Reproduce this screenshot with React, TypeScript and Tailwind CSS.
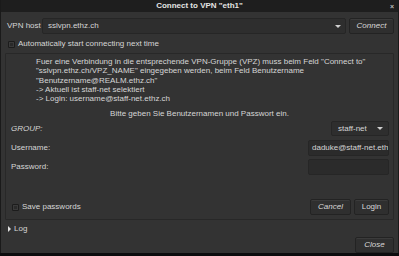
import { useState } from 'react'

const font = { fontFamily: '"Liberation Sans", Arial, sans-serif' }

function Check({ label, checked, onChange }: { label: string; checked: boolean; onChange: (v: boolean) => void }) {
  return (
    <label className="flex items-center gap-[3px] cursor-pointer">
      <span
        onClick={() => onChange(!checked)}
        className="w-[7px] h-[7px] rounded-[1px] border border-[#1c1c1c] bg-[#2a2a2a] shadow-[inset_0_0_0_1px_#3a3a3a]"
      />
      <span>{label}</span>
    </label>
  )
}

function Btn({ children, className = '' }: { children: React.ReactNode; className?: string }) {
  return (
    <button className={`h-[16px] rounded-[2px] border border-[#232323] bg-[#2f2f2f] text-[#d8d8d8] text-[8px] leading-none shadow-[inset_0_1px_0_#3b3b3b] ${className}`}>
      {children}
    </button>
  )
}

export default function App() {
  const [autoConnect, setAutoConnect] = useState(false)
  const [savePw, setSavePw] = useState(false)

  return (
    <div className="w-[399px] h-[256px] bg-[#0c0c0e] overflow-hidden text-[8px] text-[#d6d6d6]" style={font}>
      <div className="h-[253px] flex flex-col bg-[#333333] border-x border-[#1a1a1a]">
        {/* title bar */}
        <div className="h-[12px] bg-[#1e1e1e] flex items-center justify-center relative shrink-0">
          <span className="font-bold text-[8px] text-[#e4e4e4]">Connect to VPN "eth1"</span>
          <span className="absolute right-[4px] top-[2px] text-[7px] text-[#bbb] font-bold">×</span>
        </div>

        <div className="flex-1 flex flex-col px-[4px]">
          {/* host row */}
          <div className="flex items-center h-[16px] mt-[6px]">
            <span className="w-[37px] pl-[2px]">VPN host</span>
            <div className="flex-1 h-full flex items-center rounded-[2px] border border-[#262626] bg-[#2e2e2e] pl-[5px] pr-[4px]">
              <span className="flex-1">sslvpn.ethz.ch</span>
              <span className="w-0 h-0 border-x-[3px] border-x-transparent border-t-[3px] border-t-[#d0d0d0]" />
            </div>
            <Btn className="w-[45px] ml-[3px] italic">Connect</Btn>
          </div>

          {/* auto connect */}
          <div className="mt-[6px] pl-[3px] h-[8px] flex items-center">
            <Check label="Automatically start connecting next time" checked={autoConnect} onChange={setAutoConnect} />
          </div>

          {/* group panel */}
          <div className="mt-[5px] h-[167px] border border-[#282828] rounded-[1px] flex flex-col px-[4px]">
            <div className="pl-[26px] pt-[3px] leading-[9.3px]">
              <p>Fuer eine Verbindung in die entsprechende VPN-Gruppe (VPZ) muss beim Feld "Connect to"</p>
              <p>"sslvpn.ethz.ch/VPZ_NAME" eingegeben werden, beim Feld Benutzername</p>
              <p>"Benutzername@REALM.ethz.ch"</p>
              <p>-&gt; Aktuell ist staff-net selektiert</p>
              <p>-&gt; Login: username@staff-net.ethz.ch</p>
            </div>
            <p className="text-center mt-[5px]">Bitte geben Sie Benutzernamen und Passwort ein.</p>

            <div className="flex items-center justify-between mt-[1px] h-[15px]">
              <span className="pl-[1px] italic">GROUP:</span>
              <div className="w-[58px] h-full flex items-center rounded-[2px] border border-[#262626] bg-[#2e2e2e] pl-[6px] pr-[5px]">
                <span className="flex-1">staff-net</span>
                <span className="w-0 h-0 border-x-[3px] border-x-transparent border-t-[3px] border-t-[#d0d0d0]" />
              </div>
            </div>
            <div className="flex items-center justify-between mt-[4px] h-[16px]">
              <span className="pl-[1px]">Username:</span>
              <div className="w-[81px] h-full flex items-center rounded-[2px] border border-[#262626] bg-[#2b2b2b] pl-[3px] overflow-hidden whitespace-nowrap">
                daduke@staff-net.eth
              </div>
            </div>
            <div className="flex items-center justify-between mt-[3px] h-[16px]">
              <span className="pl-[1px]">Password:</span>
              <div className="w-[81px] h-full rounded-[2px] border border-[#262626] bg-[#2b2b2b]" />
            </div>

            <div className="flex items-center mt-auto mb-[4px] h-[16px]">
              <div className="flex-1 pl-[2px]">
                <Check label="Save passwords" checked={savePw} onChange={setSavePw} />
              </div>
              <Btn className="w-[41px] italic">Cancel</Btn>
              <Btn className="w-[35px] ml-[3px]">Login</Btn>
            </div>
          </div>

          {/* log */}
          <div className="flex items-center gap-[3px] mt-[4px] pl-[3px] h-[10px]">
            <span className="w-0 h-0 border-y-[3px] border-y-transparent border-l-[3px] border-l-[#e0e0e0]" />
            <span>Log</span>
          </div>

          <div className="flex justify-end mt-auto">
            <Btn className="w-[39px] italic">Close</Btn>
          </div>
        </div>
      </div>
    </div>
  )
}
